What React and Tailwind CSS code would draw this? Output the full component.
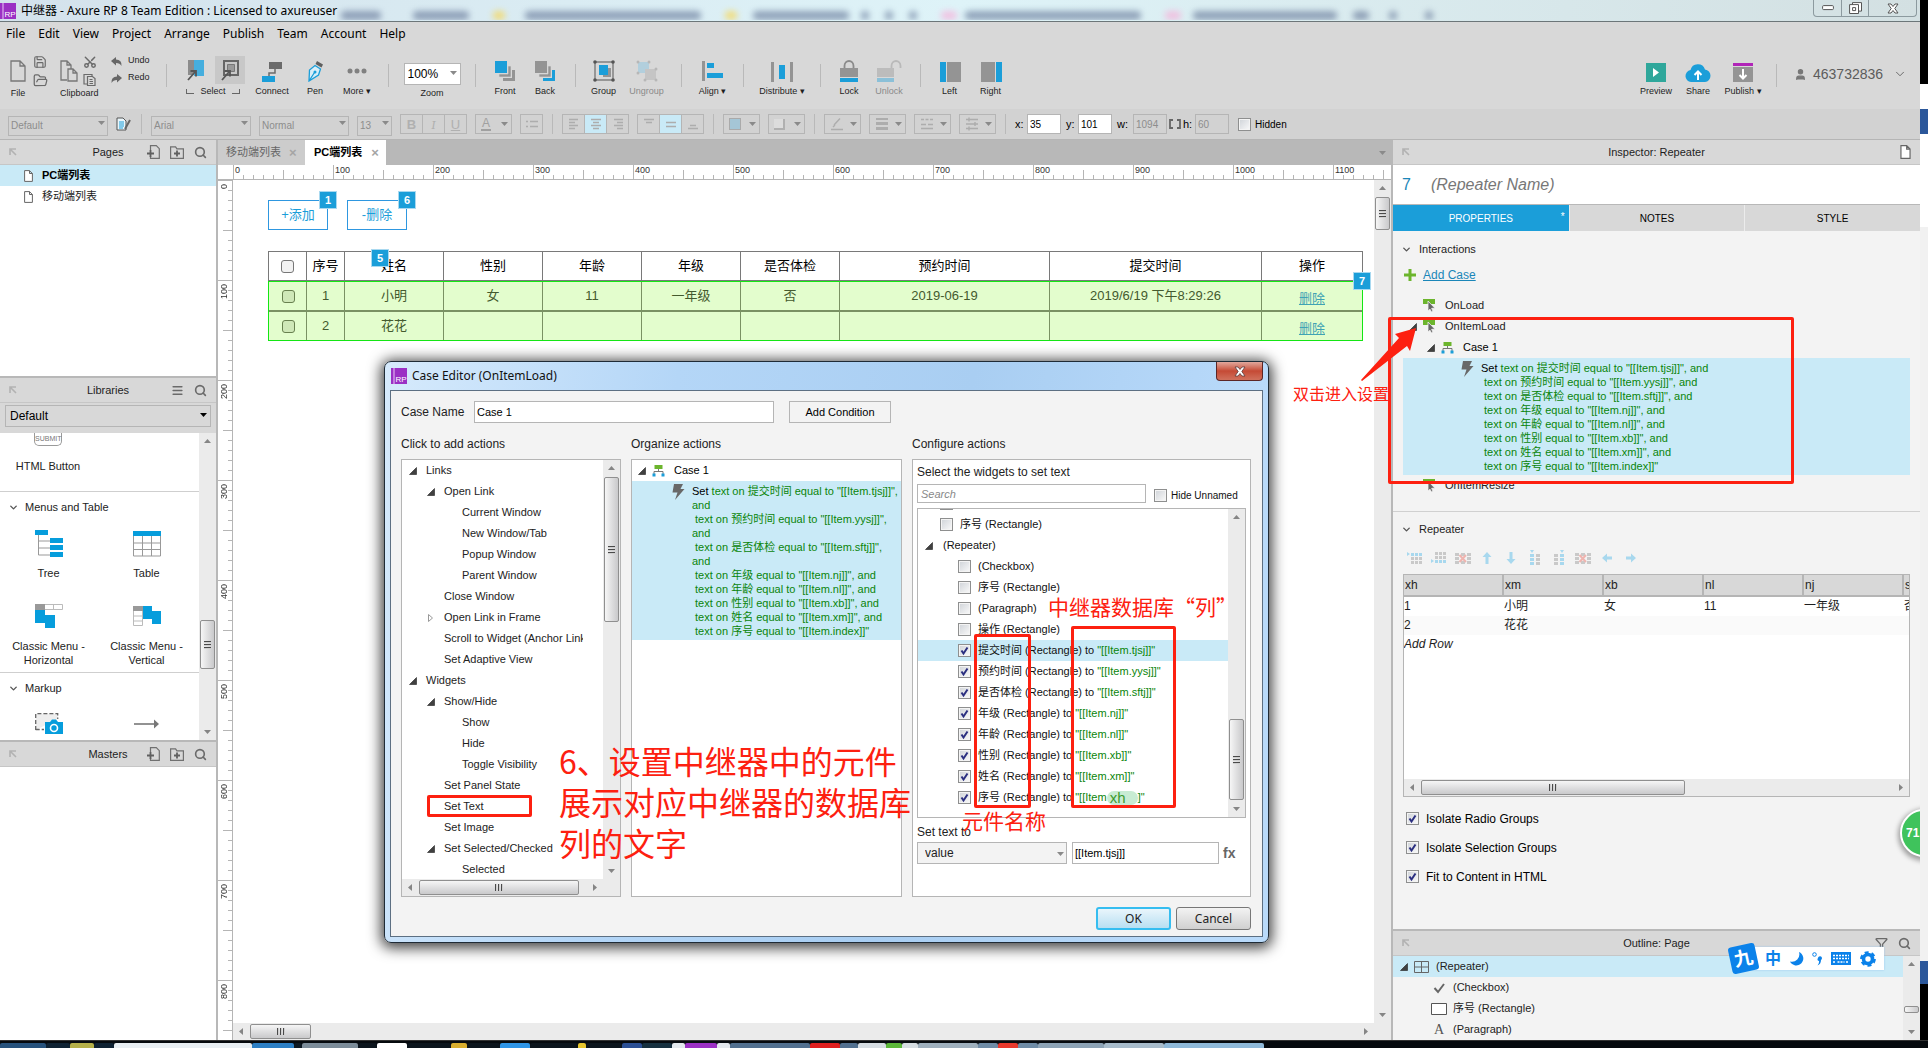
import React from "react";
import { Search, Menu, ChevronDown, Scissors, Save, FolderOpen, User, Funnel } from "lucide-react";

const BLUE = "#1b9ed9";
const GRAY = "#949494";

function Caret({ className = "", tone = "text-[#8a8a8a]" }) {
  return (
    <svg className={"pointer-events-none shrink-0 " + tone + " " + className} width="7" height="4" viewBox="0 0 7 4">
      <path d="M0 0h7L3.5 4z" fill="currentColor" />
    </svg>
  );
}

/* ---------- scroll bars ---------- */
function Tri({ dir }) {
  const d = { up: "M0 5 3.5 1 7 5z", down: "M0 2h7L3.5 6z", left: "M5 0v7L1 3.5z", right: "M2 0v7l4-3.5z" }[dir];
  return (
    <svg width="7" height="7" viewBox="0 0 7 7">
      <path d={d} fill="#858585" />
    </svg>
  );
}

function VScroll({ before = "h-0", thumb, grip = true }) {
  return (
    <div className="flex w-[17px] shrink-0 flex-col items-center bg-[#ebebeb]">
      <button aria-label="Scroll up" className="flex h-[17px] w-full shrink-0 items-center justify-center"><Tri dir="up" /></button>
      <div className={"shrink-0 " + before} />
      <div className={"flex w-[15px] shrink-0 flex-col items-center justify-center gap-px rounded-xs border border-[#8f8f8f] bg-linear-to-r from-[#f6f6f6] to-[#c9c9cb] " + thumb}>
        {grip && [0, 1, 2].map((i) => <div key={i} className="h-[2px] w-[7px] border-t border-[#4a4a4a] bg-[#cfcfcf]" />)}
      </div>
      <div className="flex-1" />
      <button aria-label="Scroll down" className="flex h-[17px] w-full shrink-0 items-center justify-center"><Tri dir="down" /></button>
    </div>
  );
}

function HScroll({ thumb }) {
  return (
    <div className="flex h-[17px] min-w-0 flex-1 items-center bg-[#ebebeb]">
      <button aria-label="Scroll left" className="flex h-full w-[17px] shrink-0 items-center justify-center"><Tri dir="left" /></button>
      <div className={"flex h-[15px] shrink-0 items-center justify-center gap-px rounded-xs border border-[#8f8f8f] bg-linear-to-b from-[#f6f6f6] to-[#c9c9cb] " + thumb}>
        {[0, 1, 2].map((i) => <div key={i} className="h-[7px] w-[2px] border-l border-[#4a4a4a] bg-[#cfcfcf]" />)}
      </div>
      <div className="flex-1" />
      <button aria-label="Scroll right" className="flex h-full w-[17px] shrink-0 items-center justify-center"><Tri dir="right" /></button>
    </div>
  );
}

/* ---------- small shared pieces ---------- */
function Check({ label, checked, gap = "gap-[7px]", children, className = "" }) {
  return (
    <label className={"flex items-center " + gap + " " + className}>
      <span className="relative flex h-[13px] w-[13px] shrink-0">
        <input type="checkbox" defaultChecked={checked} aria-label={label}
          className="peer h-[13px] w-[13px] appearance-none border border-[#8e8f8f] bg-linear-to-br from-[#cfd3d8] to-[#fafafa] shadow-[inset_0_0_0_1px_#f4f4f4]" />
        <svg className="pointer-events-none absolute inset-0 hidden peer-checked:block" width="13" height="13" viewBox="0 0 13 13">
          <path d="M3.500 6.500 5.500 9.500 9.500 3.500" fill="none" stroke="#2b2f80" strokeWidth="2" />
        </svg>
      </span>
      {children}
    </label>
  );
}

function Expander({ open = true }) {
  return (
    <svg width="8" height="8" viewBox="0 0 8 8" className="shrink-0">
      {open ? <path d="M7.500 0.500v7h-7z" fill="#404040" stroke="#222" strokeWidth=".6" /> : <path d="M1.500 0.500v7l4-3.500z" fill="#fff" stroke="#999" />}
    </svg>
  );
}

function CaseIcon() {
  return (
    <svg width="13" height="12" viewBox="0 0 13 12" className="shrink-0">
      <rect x="2.500" y="0" width="8" height="4" fill="#6cb52d" />
      <path d="M6.500 4v2M2 9V6.500h9V9" fill="none" stroke="#777" />
      <rect x="0.500" y="8.500" width="3" height="3" fill={BLUE} />
      <rect x="9.500" y="8.500" width="3" height="3" fill={BLUE} />
    </svg>
  );
}

function Bolt() {
  return (
    <svg width="13" height="16" viewBox="0 0 13 16" className="shrink-0">
      <path d="M2 0h9L8.500 5h4L3 16 5.500 8.500H.500z" fill="#686868" />
    </svg>
  );
}

function EventIcon() {
  return (
    <svg width="13" height="13" viewBox="0 0 13 13" className="shrink-0">
      <path d="M0 0h12v5H0z" fill="#6cb52d" />
      <path d="M5 2v10l2-1.800 1.500 2.800 1.500-.7L8.600 9.300H12z" fill="#666" stroke="#f3f3f3" strokeWidth=".8" />
    </svg>
  );
}

function DockArrow() {
  return (
    <svg width="8" height="8" viewBox="0 0 8 8" className="shrink-0">
      <path d="M1 7V1h6M1 1l6 6" fill="none" stroke="#b2b2b2" strokeWidth="1.600" />
    </svg>
  );
}

function AddPageIcon() {
  return (
    <svg width="13" height="14" viewBox="0 0 13 14">
      <path d="M3.500 5V.7h5.800l3 3v9.600H3.500V11" fill="none" stroke="#707070" strokeWidth="1.200" />
      <path d="M0 8.500h7M3.500 5v7" stroke="#606060" strokeWidth="1.800" />
    </svg>
  );
}

function AddFolderIcon() {
  return (
    <svg width="14" height="13" viewBox="0 0 14 13">
      <path d="M.6 12.300V.8h5l1.300 2h6.500v9.500z" fill="none" stroke="#707070" strokeWidth="1.200" />
      <path d="M4 7.500h6M7 4.500v6" stroke="#606060" strokeWidth="1.800" />
    </svg>
  );
}

function PageIcon({ w = 9, h = 12 }) {
  return (
    <svg width={w} height={h} viewBox="0 0 9 12" className="shrink-0">
      <path d="M.6.6H5.500L8.400 3.500V11.400H.6zM5.500.6V3.500H8.400" fill="#fff" stroke="#666" />
    </svg>
  );
}

function RPLogo() {
  return (
    <svg width="16" height="16" viewBox="0 0 16 16" className="shrink-0">
      <rect width="16" height="16" fill="#9b30c4" />
      <rect x="2.500" width="1" height="16" fill="#e9c8f5" />
      <text x="4.500" y="14" fontSize="8" fill="#fff" fontFamily="Liberation Sans">RP</text>
    </svg>
  );
}

/* ---------- window frame ---------- */
const blurTabs = ["ml-1 w-10", "ml-8 w-14", "ml-6 w-3 bg-amber-300", "ml-5 w-44", "ml-6 w-3 bg-amber-300", "ml-4 w-24", "ml-3 w-2", "ml-4 w-2", "ml-4 w-2", "ml-6 w-4 bg-pink-300", "ml-2 w-44", "ml-6 w-4 bg-pink-300", "ml-3 w-36", "ml-4 w-4", "ml-5 w-2", "ml-7 w-2"];

function TitleBar() {
  return (
    <header className="flex h-[22px] shrink-0 items-center overflow-hidden border-b border-[#6c7679] bg-linear-to-r from-[#d4e2ec] via-[#def3f8] to-[#d3e0e2]">
      <RPLogo />
      <h1 className="ml-[5px] shrink-0 whitespace-nowrap font-['Noto_Sans','Noto_Sans_CJK_SC',sans-serif] text-[12px] leading-5 text-black">
        中继器 - Axure RP 8 Team Edition : Licensed to axureuser
      </h1>
      <div className="flex min-w-0 flex-1 items-center overflow-hidden pt-[9px] opacity-60">
        {blurTabs.map((c, i) => (
          <div key={i} className={"h-[9px] shrink-0 rounded-sm blur-[3px] " + (c.includes("bg-") ? "" : "bg-[#5d6f92] ") + c} />
        ))}
      </div>
      <div className="mr-[3px] flex h-[17px] shrink-0 self-start rounded-b border border-t-0 border-[#8c9a9f] text-[#555]">
        <button aria-label="Minimize" className="flex w-7 items-center justify-center border-r border-[#8c9a9f]">
          <svg width="12" height="6" viewBox="0 0 12 6"><rect x=".6" y=".6" width="10.800" height="4" rx="1" fill="#fff" stroke="#555" /></svg>
        </button>
        <button aria-label="Restore" className="flex w-[27px] items-center justify-center border-r border-[#8c9a9f]">
          <svg width="13" height="12" viewBox="0 0 13 12" fill="#fff" stroke="#555"><path d="M3.500.6h9v8.500h-9z" /><path d="M.6 2.600h8.900v8.900H.6z" /><path d="M3.600 5.600h3v3h-3z" /></svg>
        </button>
        <button aria-label="Close" className="flex w-[47px] items-center justify-center">
          <svg width="12" height="11" viewBox="0 0 12 11"><path d="M1 1h3l2 2.500L8 1h3L7.800 5.500 11 10H8L6 7.500 4 10H1l3.200-4.500z" fill="#fff" stroke="#555" /></svg>
        </button>
      </div>
    </header>
  );
}

function MenuBar() {
  return (
    <nav className="flex h-6 shrink-0 items-center gap-[13px] bg-[#d8d8d8] pl-[6px] font-['Noto_Sans',sans-serif] text-[12px] text-black">
      {["File", "Edit", "View", "Project", "Arrange", "Publish", "Team", "Account", "Help"].map((m) => <button key={m}>{m}</button>)}
    </nav>
  );
}

/* ---------- main tool bar ---------- */
function Sep({ className = "" }) {
  return <div className={"mt-[18px] h-[23px] w-px shrink-0 bg-[#b9b9b9] " + className} />;
}

function Tool({ label, w, dim, children }) {
  return (
    <button className={"flex shrink-0 flex-col items-center pt-[14px] " + w + (dim ? " text-[#8a8a8a]" : " text-[#1e1e1e]")}>
      <span className={"flex h-[22px] items-center " + (dim ? "opacity-40" : "")}>{children}</span>
      <span className="mt-[3px] whitespace-nowrap text-[9px] leading-3">{label}</span>
    </button>
  );
}

function Svg({ w = 22, h = 22, children }) {
  return <svg width={w} height={h} viewBox={`0 0 ${w} ${h}`}>{children}</svg>;
}

function CursorMark() {
  return <path d="M1 21 8 13M3.500 12H9V17.500" fill="none" stroke="#555" strokeWidth="1.800" />;
}

function Toolbar() {
  return (
    <div className="flex h-[63px] shrink-0 overflow-hidden bg-[#d8d8d8]">
      <div className="flex w-[56px] shrink-0 pl-[10px] pt-[9px]">
        <button aria-label="New file" className="flex flex-col items-center text-[9px] leading-3 text-[#1e1e1e]">
          <span className="mt-[5px] flex h-[22px]"><Svg w={16}><path d="M1 1h9l5 5v15H1zM10 1v5h5" fill="none" stroke="#777" strokeWidth="1.300" /></Svg></span>
          <span className="mt-[5px]">File</span>
        </button>
        <div className="ml-[7px] flex flex-col gap-[4px] text-[#6a6a6a]">
          <button aria-label="Save"><Save size={14} strokeWidth={2} /></button>
          <button aria-label="Open"><FolderOpen size={15} strokeWidth={2} /></button>
        </div>
      </div>
      <div className="flex w-[48px] shrink-0 flex-col pl-[4px] pt-[9px]">
        <div className="flex h-[32px] gap-[5px]">
          <button aria-label="Copy" className="mt-[5px] h-[22px]"><Svg w={18}><path d="M7 20H1V1h6l4 4v4M7 1v4h4M8 9h5l4 4v8H8zM13 9v4h4" fill="none" stroke="#777" strokeWidth="1.300" /></Svg></button>
          <div className="flex flex-col gap-[4px] text-[#6a6a6a]">
            <button aria-label="Cut"><Scissors size={14} strokeWidth={2.500} className="-rotate-90" /></button>
            <button aria-label="Paste"><Svg w={13} h={13}><path d="M4.500 11H1V1.500h8V3M4.500 3.500h5l2.500 2v7H4.500zM6.500 6.500h3M6.500 8.500h3.500M6.500 10.500h3.500" fill="none" stroke="#6a6a6a" strokeWidth="1.200" /></Svg></button>
          </div>
        </div>
        <span className="text-[9px] leading-3 text-[#1e1e1e]">Clipboard</span>
      </div>
      <div className="flex w-[62px] shrink-0 flex-col gap-[3px] pl-[7px] pt-[8px] text-[9px] text-[#1e1e1e]">
        <button className="flex h-[14px] items-center gap-[6px]"><Svg w={11} h={9}><path d="M0 4 5 0v2.500q6 0 5.500 6.500Q9 6 5 6v2.500z" fill="#666" /></Svg>Undo</button>
        <button className="flex h-[14px] items-center gap-[6px]"><Svg w={11} h={9}><path d="M11 4 6 0v2.500Q0 2.500.5 9 2 6 6 6v2.500z" fill="#666" /></Svg>Redo</button>
      </div>
      <Sep />
      <div className="flex w-[78px] shrink-0 flex-col pt-[10px]">
        <div className="flex h-[28px] items-center pl-[18px]">
          <button aria-label="Select intersected" className="flex w-[22px] justify-center"><Svg w={18}><path d="M1 1h7v15H1z" fill="#8b8b8b" /><path d="M7 1h10v16H7z" fill="#45aede" /><CursorMark /></Svg></button>
          <button aria-label="Select contained" className="ml-[8px] flex h-[28px] w-[30px] items-center justify-center bg-[#c8c8c8]"><Svg w={18}><path d="M3 2h14v14H3z" fill="none" stroke="#666" strokeWidth="2" /><path d="M6.500 5.500h7v7h-7z" fill="#999" stroke="#777" /><CursorMark /></Svg></button>
        </div>
        <div className="mt-px flex items-end justify-center gap-[6px] pl-[14px] text-[9px] leading-3 text-[#1e1e1e]">
          <span className="mb-[3px] h-[5px] w-[8px] border-b border-l border-[#666]" />Select<span className="mb-[3px] h-[5px] w-[8px] border-b border-r border-[#666]" />
        </div>
      </div>
      <Tool label="Connect" w="w-[54px]"><Svg><path d="M8 2h13v7H8z" fill="#6b6b6b" /><path d="M14 9v4H8v3" fill="none" stroke="#6b6b6b" strokeWidth="1.500" /><path d="M1 16h13v6H1z" fill={BLUE} /></Svg></Tool>
      <Tool label="Pen" w="w-[32px]"><Svg w={18}><path d="M11 1 17 4.500 15.500 7.500 9.500 4z" fill="#5f5f5f" /><path d="M9 5.500 14.500 9 12.500 15 3 21 3.500 10zM3 21 8.500 12.500" fill="#d9eef8" stroke={BLUE} strokeWidth="1.300" /><circle cx="9" cy="12" r="1.500" fill={BLUE} /></Svg></Tool>
      <Tool label="More ▾" w="w-[52px]"><Svg><g fill="#808080"><circle cx="4" cy="11" r="2.500" /><circle cx="11" cy="11" r="2.500" /><circle cx="18" cy="11" r="2.500" /></g></Svg></Tool>
      <Sep className="ml-[5px]" />
      <div className="flex w-[86px] shrink-0 flex-col items-center pt-[15px]">
        <div className="relative">
          <select id="zoom" className="h-[22px] w-[57px] appearance-none border border-[#b5b5b5] bg-white pl-[3px] text-[12px] text-black"><option>100%</option></select>
          <Caret className="absolute right-[4px] top-[10px]" />
        </div>
        <label htmlFor="zoom" className="mt-[2px] text-[9px] leading-3 text-[#1e1e1e]">Zoom</label>
      </div>
      <Sep />
      <div className="w-[9px] shrink-0" />
      <Tool label="Front" w="w-[40px]"><Svg><path d="M21 10v11H9v-3h9v-8z" fill={GRAY} /><path d="M17 6v11H5v-3h9V6z" fill={GRAY} stroke="#d8d8d8" strokeWidth=".6" /><path d="M1 1h12v12H1z" fill={BLUE} /></Svg></Tool>
      <Tool label="Back" w="w-[40px]"><Svg><path d="M21 10v11H9v-3h9v-8z" fill={BLUE} /><path d="M17 6v11H5v-3h9V6z" fill={GRAY} stroke="#d8d8d8" strokeWidth=".6" /><path d="M1 1h12v12H1z" fill={GRAY} /></Svg></Tool>
      <Sep className="ml-[10px]" />
      <div className="w-[6px] shrink-0" />
      <Tool label="Group" w="w-[43px]"><Svg><path d="M10 8h8v9h-8z" fill={GRAY} /><path d="M6 5h9v10H6z" fill={BLUE} /><path d="M2 2h18v18H2z" fill="none" stroke="#555" /><g fill="#555"><circle cx="2" cy="2" r="1.800" /><circle cx="20" cy="2" r="1.800" /><circle cx="2" cy="20" r="1.800" /><circle cx="20" cy="20" r="1.800" /></g></Svg></Tool>
      <Tool label="Ungroup" w="w-[43px]" dim><Svg><path d="M2 2h11v11H2z" fill="#7cc4e6" /><path d="M9 9h11v11H9z" fill="#aaa" /><g fill="#888"><circle cx="2" cy="2" r="1.500" /><circle cx="13" cy="2" r="1.500" /><circle cx="2" cy="13" r="1.500" /><circle cx="20" cy="9" r="1.500" /><circle cx="9" cy="20" r="1.500" /><circle cx="20" cy="20" r="1.500" /></g></Svg></Tool>
      <Sep className="ml-[13px]" />
      <Tool label="Align ▾" w="w-[61px]"><Svg><path d="M0 1h3v20H0z" fill={GRAY} /><path d="M5 3h7v5H5zM5 13h16v5H5z" fill={BLUE} /></Svg></Tool>
      <Sep />
      <Tool label="Distribute ▾" w="w-[76px]"><Svg><path d="M0 2h3v20H0zM19 2h3v20h-3z" fill={GRAY} /><path d="M8 5h6v14H8z" fill={BLUE} /></Svg></Tool>
      <Sep />
      <div className="w-[8px] shrink-0" />
      <Tool label="Lock" w="w-[40px]"><Svg><path d="M6.500 8V6a4.500 5 0 0 1 9 0v2" fill="none" stroke="#8b8b8b" strokeWidth="1.800" /><path d="M2 8h18v9H2z" fill={GRAY} /><path d="M2 18h18v4H2z" fill={BLUE} /></Svg></Tool>
      <Tool label="Unlock" w="w-[40px]" dim><Svg w={26}><path d="M15.500 8V6a4.500 5 0 0 1 9 0v2" fill="none" stroke="#8b8b8b" strokeWidth="1.800" /><path d="M1 8h17v9H1z" fill={GRAY} /><path d="M1 18h17v4H1z" fill={BLUE} /></Svg></Tool>
      <Sep className="ml-[11px]" />
      <div className="w-[8px] shrink-0" />
      <Tool label="Left" w="w-[41px]"><Svg><path d="M1 2h6v20H1z" fill={BLUE} /><path d="M8 2h14v20H8z" fill={GRAY} /></Svg></Tool>
      <Tool label="Right" w="w-[41px]"><Svg><path d="M1 2h14v20H1z" fill={GRAY} /><path d="M16 2h6v20h-6z" fill={BLUE} /></Svg></Tool>
      <div className="flex-1" />
      <Tool label="Preview" w="w-[44px]"><Svg w={20}><path d="M0 3h20v19H0z" fill="#2fa79b" /><path d="M7 8v9l6-4.500z" fill="#fff" /></Svg></Tool>
      <Tool label="Share" w="w-[40px]"><Svg w={26}><path d="M6 22a6 6 0 0 1-.5-11.900A7.500 7.500 0 0 1 20 9.500 6.300 6.300 0 0 1 20 22z" fill={BLUE} /><path d="M13 20v-8M9.500 15 13 11.500 16.500 15" fill="none" stroke="#fff" strokeWidth="2" /></Svg></Tool>
      <Tool label="Publish ▾" w="w-[50px]"><Svg w={20}><path d="M0 3h20v3H0z" fill="#b125b8" /><path d="M0 7h20v15H0z" fill={GRAY} /><path d="M10 9v9M6.500 15 10 18.500 13.500 15" fill="none" stroke="#fff" strokeWidth="2" /></Svg></Tool>
      <Sep className="ml-[8px]" />
      <button className="mt-[14px] flex h-[28px] w-[143px] shrink-0 items-center self-start pl-[17px] text-[14px] text-[#5c5c5c]">
        <User size={13} fill="#777" stroke="#777" />
        <span className="ml-[6px]">463732836</span>
        <ChevronDown size={14} strokeWidth={1.500} className="ml-[10px]" />
      </button>
    </div>
  );
}

/* ---------- format bar ---------- */
function FSep() {
  return <div className="mx-px h-[20px] w-px shrink-0 bg-[#b9b9b9]" />;
}

function FSelect({ label, value, w }) {
  return (
    <div className={"relative shrink-0 " + w}>
      <select aria-label={label} className="h-[20px] w-full appearance-none border border-[#b5b5b5] pl-[2px] text-[10px] text-[#8d8d8d]"><option>{value}</option></select>
      <Caret className="absolute right-[3px] top-[9px]" />
    </div>
  );
}

function Segs({ items }) {
  return (
    <div className="flex shrink-0 border border-[#b5b5b5]">
      {items.map(([name, node, on], i) => (
        <button key={name} aria-label={name} className={"flex h-[18px] items-center justify-center text-[13px] leading-none text-[#b0b0b0] " + (i ? "w-[22px] border-l border-[#b5b5b5] " : "w-[21px] ") + (on ? "bg-[#c9eaf7]" : "")}>{node}</button>
      ))}
    </div>
  );
}

function Lines({ d }) {
  return <Svg w={14} h={14}><path d={d} stroke="#adadad" strokeWidth="1.400" fill="none" /></Svg>;
}

function DropBtn({ name, children }) {
  return (
    <button aria-label={name} className="flex h-[20px] w-[37px] shrink-0 items-center justify-between border border-[#b5b5b5] pl-[5px] pr-[3px]">
      {children}<Caret />
    </button>
  );
}

function NumField({ id, label, lw, value, off, className = "" }) {
  return (
    <div className={"flex items-center text-[11px] " + className}>
      <label htmlFor={id} className={"text-black " + lw}>{label}</label>
      <input id={id} defaultValue={value} className={"h-[20px] w-[34px] border border-[#b5b5b5] pl-[2px] text-[10px] " + (off ? "text-[#8d8d8d]" : "bg-white text-black")} />
    </div>
  );
}

function FormatBar() {
  return (
    <div className="flex h-[31px] shrink-0 items-center gap-2 overflow-hidden border-b border-[#b5b5b5] bg-[#d2d2d2] pl-2">
      <FSelect label="Widget style" value="Default" w="w-[100px]" />
      <button aria-label="Manage styles" className="w-4 shrink-0"><Svg w={16} h={14}><path d="M1 1h6l3 3v9H1z" fill="#eaf6fb" stroke="#555" /><path d="M3 5h5M3 7h5M3 9h5M3 11h4" stroke={BLUE} /><path d="M9 12 14 3" stroke="#666" strokeWidth="2" /></Svg></button>
      <FSep />
      <FSelect label="Font" value="Arial" w="w-[100px]" />
      <FSelect label="Typeface" value="Normal" w="w-[90px]" />
      <FSelect label="Font size" value="13" w="w-[35px]" />
      <Segs items={[["Bold", <b>B</b>], ["Italic", <i className="font-serif">I</i>], ["Underline", <u>U</u>]]} />
      <DropBtn name="Font color"><span className="border-b-2 border-[#a0a0a0] px-px text-[12px] leading-[11px] text-[#a0a0a0]">A</span></DropBtn>
      <Segs items={[["Bullets", <Lines d="M1 4.500h2M5 4.500h8M1 9.500h2M5 9.500h8" />]]} />
      <FSep />
      <Segs items={[["Align left", <Lines d="M2 2.500h9M2 5.500h6M2 8.500h9M2 11.500h6" />], ["Align center", <Lines d="M2 2.500h10M4 5.500h6M2 8.500h10M4 11.500h6" />, true], ["Align right", <Lines d="M3 2.500h9M6 5.500h6M3 8.500h9M6 11.500h6" />]]} />
      <Segs items={[["Align top", <Lines d="M2 2.500h10M4 5.500h6" />], ["Align middle", <Lines d="M2 5.500h10M2 9.500h10" />, true], ["Align bottom", <Lines d="M4 8.500h6M2 11.500h10" />]]} />
      <FSep />
      <DropBtn name="Fill color"><span className="h-[12px] w-[12px] border border-[#aaa] bg-[#a5c6d6]" /></DropBtn>
      <DropBtn name="Outer shadow"><span className="h-[11px] w-[11px] border-b-2 border-r-2 border-[#b0b0b0] bg-[#dcdcdc]" /></DropBtn>
      <FSep />
      <DropBtn name="Line color"><Lines d="M4 8 10 1.500M1 12.500h12M3 10 5 8" /></DropBtn>
      <DropBtn name="Line width"><Svg w={14} h={14}><path d="M1 1h12v2H1zM1 5h12v3H1zM1 10h12v3H1z" fill="#adadad" /></Svg></DropBtn>
      <DropBtn name="Line style"><Lines d="M1 2.500h3M5.500 2.500h3M10 2.500h3M1 7.500h5M8 7.500h5M1 11.500h12" /></DropBtn>
      <DropBtn name="Arrow style"><Lines d="M1 2.500h12M1 7h12M1 11.500h12M4 .5v4M10 5v4M4 9.500v4" /></DropBtn>
      <FSep />
      <div className="flex shrink-0 items-center">
        <NumField id="fx" label="x:" lw="w-3" value="35" />
        <NumField id="fy" label="y:" lw="w-3" value="101" className="ml-[5px]" />
        <NumField id="fw" label="w:" lw="w-4" value="1094" off className="ml-[5px]" />
        <button aria-label="Keep proportions" className="mx-[2px]"><Svg w={12} h={10}><path d="M4 1H1v8h3M8 1h3v8H8" fill="none" stroke="#666" strokeWidth="1.800" /></Svg></button>
        <NumField id="fh" label="h:" lw="w-3" value="60" off />
        <Check gap="gap-[4px]" className="ml-[9px] text-[10px] text-black">Hidden</Check>
      </div>
    </div>
  );
}

/* ---------- left column ---------- */
function PanelHead({ title, children }) {
  return (
    <div className="grid h-[25px] shrink-0 grid-cols-[1fr_auto_1fr] items-center border-b border-[#c6c6c6] bg-[#d8d8d8] px-[9px] text-[11px] text-[#1e1e1e]">
      <button aria-label={"Dock " + title} className="justify-self-start"><DockArrow /></button>
      <h2>{title}</h2>
      <div className="flex items-center gap-[10px] justify-self-end text-[#6a6a6a]">{children}</div>
    </div>
  );
}

function AddSearch() {
  return (
    <>
      <button aria-label="Add"><AddPageIcon /></button>
      <button aria-label="Add folder"><AddFolderIcon /></button>
      <button aria-label="Search"><Search size={13} strokeWidth={3} /></button>
    </>
  );
}

function LibItem({ label, children }) {
  return (
    <button className="flex flex-col items-center px-1 text-[11px] leading-[14px] text-[#222]">
      <span className="flex h-[30px] items-center">{children}</span>
      <span className="mt-[7px]">{label}</span>
    </button>
  );
}

function LibHead({ children }) {
  return (
    <h3 className="flex items-center gap-[6px] border-t border-[#cfcfcf] pl-[8px] pt-[8px] text-[11px] leading-[14px] text-[#222]">
      <ChevronDown size={11} strokeWidth={3} className="text-[#555]" />{children}
    </h3>
  );
}

function LeftColumn() {
  return (
    <aside className="flex w-[218px] shrink-0 flex-col border-r-2 border-[#b8b8b8] bg-white">
      <section className="flex h-[236px] shrink-0 flex-col">
        <PanelHead title="Pages"><AddSearch /></PanelHead>
        <button className="flex h-[21px] items-center gap-[9px] bg-[#c9eaf7] pl-[24px] text-[11px] font-bold text-black"><PageIcon />PC端列表</button>
        <button className="flex h-[21px] items-center gap-[9px] pl-[24px] text-[11px] text-[#222]"><PageIcon />移动端列表</button>
      </section>
      <section className="flex h-[364px] shrink-0 flex-col border-t-2 border-[#b8b8b8]">
        <div className="bg-[#d8d8d8]">
          <PanelHead title="Libraries">
            <button aria-label="Library menu"><Menu size={13} strokeWidth={3} /></button>
            <button aria-label="Search libraries"><Search size={13} strokeWidth={3} /></button>
          </PanelHead>
          <div className="relative px-[5px] pb-[6px]">
            <select aria-label="Library" className="h-[22px] w-full appearance-none border border-[#b5b5b5] pl-1 text-[12px] text-black"><option>Default</option></select>
            <Caret className="absolute right-[9px] top-[10px]" tone="text-black" />
          </div>
        </div>
        <div className="flex min-h-0 flex-1">
          <div className="flex-1 overflow-hidden">
            <button className="flex w-[96px] flex-col items-center text-[11px] leading-[14px] text-[#222]">
              <span className="h-[13px] w-[28px] rounded-b-[5px] border border-t-0 border-[#9a9a9a] text-center text-[7px] leading-[11px] text-[#777]">SUBMIT</span>
              <span className="mt-[13px]">HTML Button</span>
            </button>
            <div className="h-[18px]" />
            <LibHead>Menus and Table</LibHead>
            <div className="grid grid-cols-[97px_99px] gap-y-[22px] pb-[5px] pt-[15px]">
              <LibItem label="Tree"><Svg w={28} h={28}><path d="M3.500 4v21H16M3.500 11H16M3.500 18H16" fill="none" stroke="#999" /><path d="M0 0h13v5H0zM15 8h13v5H15zM15 15h13v5H15zM15 22h13v5H15z" fill="#069ddc" /></Svg></LibItem>
              <LibItem label="Table"><Svg w={28} h={26}><path d="M.5 5v20h27V5M.5 12h27M.5 18.500h27M9.500 5v20M18.500 5v20" fill="none" stroke="#999" /><path d="M0 0h28v5H0z" fill="#069ddc" /></Svg></LibItem>
              <LibItem label="Classic Menu - Horizontal"><Svg w={28} h={26}><path d="M10 .5h17.500v5H10M18.500 0v6" fill="none" stroke="#bbb" /><path d="M0 0h10v6H0z" fill="#999" /><path d="M0 6h10v5h10v13H10v-5H0z" fill="#069ddc" /></Svg></LibItem>
              <LibItem label="Classic Menu - Vertical"><Svg w={28} h={22}><path d="M.5 5v14.500h9V5M.5 10h9M.5 15h9" fill="none" stroke="#bbb" /><path d="M0 0h10v5H0z" fill="#999" /><path d="M10 0h9v5h9v13h-9v-5h-9z" fill="#069ddc" /></Svg></LibItem>
            </div>
            <LibHead>Markup</LibHead>
            <div className="grid grid-cols-[97px_99px] justify-items-center pt-[18px]">
              <button aria-label="Snapshot"><Svg w={28} h={22}><path d="M.7 17V.7h22V6M.7 16.500H9" fill="#eee" stroke="#666" strokeWidth="1.300" strokeDasharray="4 2" /><path d="M10 9h5l2-2.500h4L23 9h5v12H10z" fill="#069ddc" /><circle cx="19" cy="15" r="3.500" fill="none" stroke="#fff" strokeWidth="1.600" /></Svg></button>
              <button aria-label="Arrow"><Svg w={26} h={12}><path d="M0 6h22" stroke="#777" strokeWidth="1.600" /><path d="M20 1.500 25 6l-5 4.500z" fill="#777" /></Svg></button>
            </div>
          </div>
          <VScroll before="h-[170px]" thumb="h-[49px]" />
        </div>
      </section>
      <section className="flex-1 border-t-2 border-[#b8b8b8]">
        <PanelHead title="Masters"><AddSearch /></PanelHead>
      </section>
    </aside>
  );
}

/* ---------- canvas ---------- */
const steps = [10, 20, 30, 40, 50, 60, 70, 80, 90];

function HRuler() {
  return (
    <div className="flex h-[15px] shrink-0 overflow-hidden border-b border-[#b5b5b5] bg-white pl-[15px]">
      {Array.from({ length: 12 }, (_, i) => (
        <div key={i} className="relative w-[100px] shrink-0 border-l border-[#b5b5b5] pl-px text-[9px] leading-[11px] text-[#333]">
          {i * 100}
          <svg className="absolute -left-px bottom-0" width="100" height="14" viewBox="0 0 100 14">
            {steps.map((s) => <path key={s} d={`M${s + 0.5} 14V${s === 50 ? 5 : 10}`} stroke="#b5b5b5" />)}
          </svg>
        </div>
      ))}
    </div>
  );
}

function VRuler() {
  return (
    <div className="w-[15px] shrink-0 overflow-hidden border-r border-[#b5b5b5] bg-white">
      {Array.from({ length: 9 }, (_, i) => (
        <div key={i} className="relative h-[100px] border-t border-[#b5b5b5] pt-[3px] text-[9px] text-[#333]">
          <span className="block rotate-180 leading-[12px] [writing-mode:vertical-rl]">{i * 100}</span>
          <svg className="absolute -top-px right-0" width="15" height="100" viewBox="0 0 15 100">
            {steps.map((s) => <path key={s} d={`M15 ${s + 0.5}H${s === 50 ? 6 : 11}`} stroke="#b5b5b5" />)}
          </svg>
        </div>
      ))}
    </div>
  );
}

function Badge({ n, className }) {
  return <span className={"absolute flex h-[18px] w-[18px] items-center justify-center border border-[#a9d9f0] bg-[#1b9ed9] text-[11px] font-bold text-white " + className}>{n}</span>;
}

function Cols() {
  return (
    <colgroup>
      <col className="w-[38px]" /><col className="w-[38px]" /><col className="w-[99px]" /><col className="w-[99px]" /><col className="w-[99px]" /><col className="w-[99px]" /><col className="w-[99px]" /><col className="w-[210px]" /><col className="w-[212px]" /><col className="w-[100px]" />
    </colgroup>
  );
}

function RowBox({ label, green }) {
  return <input type="checkbox" aria-label={label} className={"block h-[13px] w-[13px] appearance-none rounded-[3px] border " + (green ? "ml-[13px] border-[#68804f] bg-[#cfe8b8]" : "ml-[12px] border-[#777] bg-[#f2f2f2]")} />;
}

const records = [
  ["1", "小明", "女", "11", "一年级", "否", "2019-06-19", "2019/6/19 下午8:29:26"],
  ["2", "花花", "", "", "", "", "", ""],
];

function Page() {
  return (
    <div className="min-w-0 flex-1 overflow-hidden bg-white pl-[35px] pt-[20px] text-[13px]">
      <div className="flex gap-[19px]">
        {[["+添加", "1"], ["-删除", "6"]].map(([t, n]) => (
          <div key={n} className="relative">
            <button className="h-[30px] w-[60px] border border-[#2e97e0] text-[#1b9ed9]">{t}</button>
            <Badge n={n} className="left-[51px] top-[-9px]" />
          </div>
        ))}
      </div>
      <div className="relative mt-[21px] w-[1093px]">
        <table className="w-full table-fixed border-separate border-spacing-0 border border-[#797979] text-black">
          <Cols />
          <thead>
            <tr className="h-[28px]">
              <th className="border-r border-[#797979] p-0"><RowBox label="全选" /></th>
              {["序号", "姓名", "性别", "年龄", "年级", "是否体检", "预约时间", "提交时间", "操作"].map((h, i) => (
                <th key={h} className={"p-0 font-normal leading-[18px] " + (i < 8 ? "border-r border-[#797979]" : "")}>{h}</th>
              ))}
            </tr>
          </thead>
        </table>
        <table className="w-full table-fixed border-separate border-spacing-0 border border-[#14e614] bg-[#e3fdcd] text-[#445a2e]">
          <Cols />
          <tbody>
            {records.map((r, ri) => {
              const b = ri === 0 ? " border-b-2 border-[#7a9163]" : " border-[#7a9163]";
              return (
                <tr key={ri} className={ri === 0 ? "h-[30px]" : "h-[28px]"}>
                  <td className={"border-r p-0" + b}><RowBox label={"选择 " + r[0]} green /></td>
                  {r.map((c, i) => <td key={i} className={"border-r p-0 text-center leading-[18px]" + b}>{c}</td>)}
                  <td className={"p-0 pt-[6px] text-center leading-[18px]" + b}><a href="#delete" className="text-[#3fa3b4] underline">删除</a></td>
                </tr>
              );
            })}
          </tbody>
        </table>
        <Badge n="5" className="left-[103px] top-[-2px]" />
        <Badge n="7" className="right-[-10px] top-[21px]" />
      </div>
    </div>
  );
}

function Canvas() {
  return (
    <main className="flex min-w-0 flex-1 flex-col">
      <div className="flex h-[25px] shrink-0 items-stretch bg-[#b8b8b8] text-[11px]">
        <div className="flex w-[87px] items-center gap-[8px] bg-[#cccccc] pl-[8px] text-[#666]"><button>移动端列表</button><button aria-label="Close tab" className="text-[13px] font-bold text-[#a5a5a5]">×</button></div>
        <div className="flex w-[81px] items-center gap-[9px] bg-white pl-[9px] text-black"><button className="font-bold">PC端列表</button><button aria-label="Close tab" className="text-[13px] font-bold text-[#a5a5a5]">×</button></div>
        <button aria-label="Tab list" className="ml-auto mr-[5px]"><Caret /></button>
      </div>
      <HRuler />
      <div className="flex min-h-0 flex-1">
        <VRuler />
        <div className="flex min-w-0 flex-1 flex-col">
          <div className="flex min-h-0 flex-1"><Page /><VScroll thumb="h-[33px]" /></div>
          <div className="flex"><HScroll thumb="w-[61px]" /><div className="w-[17px] bg-[#ebebeb]" /></div>
        </div>
      </div>
    </main>
  );
}

/* ---------- inspector ---------- */
const actions = [
  ["提交时间", "tjsj"], ["预约时间", "yysj"], ["是否体检", "sftj"], ["年级", "nj"],
  ["年龄", "nl"], ["性别", "xb"], ["姓名", "xm"], ["序号", "index"],
];

function ActionLines({ wrapLong }) {
  return (
    <div className="text-[11px] leading-[14px] text-[#0a850a]">
      {actions.map(([n, f], i) => {
        const last = i === actions.length - 1;
        const wrap = wrapLong && i < 3;
        return (
          <div key={f} className={"whitespace-pre " + (wrap ? "h-[28px]" : "h-[14px]")}>
            {i === 0 ? <span className="text-black">Set </span> : " "}
            {`text on ${n} equal to "[[Item.${f}]]"${last ? "" : ","}`}
            {last ? "" : wrap ? "\nand" : " and"}
          </div>
        );
      })}
    </div>
  );
}

function SectionHead({ children, className }) {
  return (
    <h3 className={"flex shrink-0 items-center gap-[7px] pl-[8px] text-[11px] text-[#222] " + className}>
      <ChevronDown size={11} strokeWidth={3} className="text-[#555]" />{children}
    </h3>
  );
}

function GridOp({ name, kind }) {
  const g = "#c9c9c9", b = "#a8d8ee";
  return (
    <button aria-label={name} className="flex w-4 justify-center">
      <Svg w={16} h={16}>
        {kind === "up" && <path d="M8 2 12.500 7H9.500v7h-3V7H3.500z" fill={b} />}
        {kind === "down" && <path d="M8 14 3.500 9h3V2h3v7h3z" fill={b} />}
        {kind === "left" && <path d="M3 8l5-4.500V6.500h5v3H8v3z" fill={b} />}
        {kind === "right" && <path d="M13 8 8 3.500V6.500H3v3h5v3z" fill={b} />}
        {kind === "rowa" && <><path d="M4 3h3v3H4zM8 3h3v3H8zM12 3h3v3h-3z" fill={b} /><path d="M4 7h3v3H4zM8 7h3v3H8zM12 7h3v3h-3zM4 11h3v3H4zM8 11h3v3H8zM12 11h3v3h-3z" fill={g} /><path d="M0 2v4l3-2z" fill={b} /></>}
        {kind === "rowb" && <><path d="M4 10h3v3H4zM8 10h3v3H8zM12 10h3v3h-3z" fill={b} /><path d="M4 2h3v3H4zM8 2h3v3H8zM12 2h3v3h-3zM4 6h3v3H4zM8 6h3v3H8zM12 6h3v3h-3z" fill={g} /><path d="M0 9v4l3-2z" fill={b} /></>}
        {kind === "del" && <><path d="M0 3h4v3H0zM6 3h4v3H6zM12 3h4v3h-4zM0 7h4v3H0zM12 7h4v3h-4zM0 11h4v3H0zM6 11h4v3H6zM12 11h4v3h-4z" fill={g} /><path d="M4.500 5 11 12M11 5 4.500 12" stroke="#efb4af" strokeWidth="2" /></>}
        {kind === "cola" && <><path d="M3 4h4v3H3zM3 8h4v3H3zM3 12h4v3H3zM3 0h4L5 3z" fill={b} /><path d="M9 4h4v3H9zM9 8h4v3H9zM9 12h4v3H9z" fill={g} /></>}
        {kind === "colb" && <><path d="M9 4h4v3H9zM9 8h4v3H9zM9 12h4v3H9zM9 0h4l-2 3z" fill={b} /><path d="M3 4h4v3H3zM3 8h4v3H3zM3 12h4v3H3z" fill={g} /></>}
      </Svg>
    </button>
  );
}

function Inspector() {
  return (
    <aside className="flex w-[529px] shrink-0 flex-col border-l-2 border-[#b8b8b8] bg-[#f3f3f3]">
      <PanelHead title="Inspector: Repeater"><button aria-label="Page inspector"><PageIcon w={11} h={14} /></button></PanelHead>
      <div className="flex h-[40px] shrink-0 items-center gap-5 border-b border-[#b8b8b8] bg-white pl-[9px] text-[16px]">
        <span className="text-[#1a86b8]">7</span>
        <input aria-label="Repeater name" placeholder="(Repeater Name)" className="w-64 italic text-[#555] placeholder:text-[#777]" />
      </div>
      <div className="grid h-[26px] shrink-0 grid-cols-3 text-[10px] text-black" role="tablist">
        <button role="tab" aria-selected="true" className="relative bg-[#1b9ed9] text-white">PROPERTIES<span className="absolute right-1 top-[4px]">*</span></button>
        <button role="tab" className="border-l border-[#ececec] bg-[#d8d8d8]">NOTES</button>
        <button role="tab" className="border-l border-[#ececec] bg-[#d8d8d8]">STYLE</button>
      </div>
      <div className="flex min-h-0 flex-1 flex-col overflow-hidden">
        <SectionHead className="mt-2 h-5">Interactions</SectionHead>
        <div className="mt-[6px] flex h-5 shrink-0 items-center gap-[7px] pl-[11px]">
          <Svg w={12} h={12}><path d="M4.500 0h3v4.500H12v3H7.500V12h-3V7.500H0v-3h4.500z" fill="#6cb52d" /></Svg>
          <a href="#add-case" className="text-[12px] text-[#1a86b8] underline">Add Case</a>
        </div>
        <div className="mt-[10px] flex h-[21px] shrink-0 items-center gap-[9px] pl-[30px] text-[11px] text-[#222]"><EventIcon />OnLoad</div>
        <div className="flex h-[21px] shrink-0 items-center pl-[16px] text-[11px] text-[#222]"><Expander /><span className="ml-[6px] flex items-center gap-[9px]"><EventIcon />OnItemLoad</span></div>
        <div className="flex h-[21px] shrink-0 items-center pl-[34px] text-[11px] text-black"><Expander /><span className="ml-[6px] flex items-center gap-[9px]"><CaseIcon />Case 1</span></div>
        <div className="mx-[10px] flex shrink-0 gap-[7px] bg-[#c9eaf7] pb-[2px] pl-[58px] pt-[3px]"><Bolt /><ActionLines /></div>
        <div className="flex h-[21px] shrink-0 items-center gap-[9px] pl-[30px] text-[11px] text-[#222]"><EventIcon />OnItemResize</div>
        <SectionHead className="mt-[15px] h-[35px] border-t border-[#d0d0d0]">Repeater</SectionHead>
        <div className="mt-[2px] flex h-5 shrink-0 items-center gap-2 pl-[14px]">
          {[["Add row above", "rowa"], ["Add row below", "rowb"], ["Delete row", "del"], ["Move row up", "up"], ["Move row down", "down"], ["Add column left", "cola"], ["Add column right", "colb"], ["Delete column", "del"], ["Move column left", "left"], ["Move column right", "right"]].map(([n, k]) => <GridOp key={n} name={n} kind={k} />)}
        </div>
        <div className="mx-[10px] mt-[6px] flex h-[223px] shrink-0 flex-col overflow-hidden border border-[#b5b5b5] bg-white">
          <div className="flex-1 overflow-hidden">
            <table className="w-[600px] table-fixed border-separate border-spacing-0 text-left text-[12px] leading-[19px] text-[#1e1e1e]">
              <thead>
                <tr>{["xh", "xm", "xb", "nl", "nj", "sftj"].map((h) => <th key={h} className="h-[22px] border-b-2 border-r-2 border-[#b5b5b5] bg-[#d8d8d8] p-0 pl-px font-normal">{h}</th>)}</tr>
              </thead>
              <tbody>
                {[["1", "小明", "女", "11", "一年级", "否"], ["2", "花花", "", "", "", ""]].map((r) => (
                  <tr key={r[0]} className="even:bg-[#fafafa]">{r.map((c, i) => <td key={i} className="h-[19px] p-0">{c}</td>)}</tr>
                ))}
                <tr><td className="p-0 italic">Add Row</td></tr>
              </tbody>
            </table>
          </div>
          <div className="flex"><HScroll thumb="w-[264px]" /></div>
        </div>
        <div className="mt-[7px] flex flex-col pl-[13px] text-[12px] text-black">
          {["Isolate Radio Groups", "Isolate Selection Groups", "Fit to Content in HTML"].map((t) => <Check key={t} checked className="h-[29px]">{t}</Check>)}
        </div>
      </div>
      <section className="flex h-[111px] shrink-0 flex-col border-t-2 border-[#b8b8b8]">
        <PanelHead title="Outline: Page">
          <button aria-label="Filter"><Funnel size={13} strokeWidth={2.500} /></button>
          <button aria-label="Search outline"><Search size={13} strokeWidth={3} /></button>
        </PanelHead>
        <div className="flex min-h-0 flex-1 text-[11px] text-[#222]">
          <div className="flex-1">
            <button className="flex h-[21px] w-full items-center bg-[#c9eaf7] pl-[7px]"><Expander /><span className="ml-[6px] flex items-center gap-[7px]"><Svg w={15} h={12}><path d="M.5.5h14v11H.5zM7.500.5v11M.5 6h14" fill="none" stroke="#666" /></Svg>(Repeater)</span></button>
            <button className="flex h-[21px] w-full items-center gap-[6px] pl-[38px]"><Svg w={16} h={12}><path d="M3.500 6 7 10 13 2" fill="none" stroke="#666" strokeWidth="2" /></Svg>(Checkbox)</button>
            <button className="flex h-[21px] w-full items-center gap-[6px] pl-[38px]"><Svg w={16} h={12}><path d="M.5.5h15v11H.5z" fill="#fff" stroke="#555" /></Svg>序号 (Rectangle)</button>
            <button className="flex h-[21px] w-full items-center gap-[6px] pl-[38px]"><span className="w-4 text-center font-['Liberation_Serif',serif] text-[14px] leading-none text-[#555]">A</span>(Paragraph)</button>
          </div>
          <VScroll before="h-[33px]" thumb="h-[7px]" grip={false} />
        </div>
      </section>
    </aside>
  );
}

/* ---------- case editor dialog ---------- */
const tree = [
  [0, "Links", 1], [1, "Open Link", 1], [2, "Current Window"], [2, "New Window/Tab"], [2, "Popup Window"], [2, "Parent Window"],
  [1, "Close Window"], [1, "Open Link in Frame", 2], [1, "Scroll to Widget (Anchor Link)"], [1, "Set Adaptive View"],
  [0, "Widgets", 1], [1, "Show/Hide", 1], [2, "Show"], [2, "Hide"], [2, "Toggle Visibility"], [1, "Set Panel State"],
  [1, "Set Text"], [1, "Set Image"], [1, "Set Selected/Checked", 1], [2, "Selected"],
];
const indent = ["pl-[7px]", "pl-[25px]", "pl-[43px]"];

const plain = ["(Checkbox)", "序号 (Rectangle)", "(Paragraph)", "操作 (Rectangle)"];

function CaseEditor() {
  return (
    <div role="dialog" aria-labelledby="case-title" className="absolute left-[384px] top-[361px] flex w-[885px] flex-col rounded-[7px] border border-[#1f2b36] bg-[linear-gradient(100deg,#d6eafc_0%,#b4d6f7_30%,#a9cef2_60%,#b9dafa_90%)] px-[5px] pb-[5px] shadow-[0_2px_14px_3px_rgba(0,0,0,0.75)]">
      <div className="flex h-[28px] items-start justify-between">
        <div className="flex h-full items-center gap-[5px] pl-px">
          <RPLogo />
          <h2 id="case-title" className="font-['Noto_Sans',sans-serif] text-[12px] text-[#111]">Case Editor (OnItemLoad)</h2>
        </div>
        <button aria-label="Close dialog" className="flex h-[19px] w-[47px] items-center justify-center rounded-b border border-t-0 border-[#5c2626] bg-linear-to-b from-[#e0a79c] via-[#c54a35] to-[#d0705c]">
          <svg width="12" height="11" viewBox="0 0 12 11"><path d="M1 1h3l2 2.500L8 1h3L7.800 5.500 11 10H8L6 7.500 4 10H1l3.200-4.500z" fill="#fff" stroke="#5b3a3a" strokeWidth=".8" /></svg>
        </button>
      </div>
      <div className="flex flex-col border border-[#5c6f82] bg-[#f3f3f3] px-[10px] pb-[6px] pt-[10px]">
        <div className="flex items-center">
          <label htmlFor="case-name" className="w-[73px] text-[12px] text-[#222]">Case Name</label>
          <input id="case-name" defaultValue="Case 1" className="h-[22px] w-[300px] border border-[#b5b5b5] bg-white pl-[2px] text-[11px] text-black" />
          <button className="ml-[15px] h-[22px] w-[102px] border border-[#b5b5b5] text-[11px] text-black">Add Condition</button>
        </div>
        <div className="mt-[12px] grid grid-cols-[220px_271px_339px] gap-x-[10px] text-[12px] leading-[18px] text-[#222]">
          <h3>Click to add actions</h3><h3>Organize actions</h3><h3>Configure actions</h3>
        </div>
        <div className="mt-[6px] grid grid-cols-[220px_271px_339px] gap-x-[10px]">
          <div className="flex h-[438px] flex-col border border-[#b5b5b5] bg-white">
            <div className="flex min-h-0 flex-1">
              <ul className="min-w-0 flex-1 overflow-hidden pr-5">
                {tree.map(([lvl, t, arrow]) => (
                  <li key={t} className={"flex h-[21px] items-center overflow-hidden text-[11px] text-[#222] " + indent[lvl]}>
                    <span className="w-[17px] shrink-0">{arrow && <Expander open={arrow === 1} />}</span>
                    <button className="whitespace-nowrap">{t}</button>
                  </li>
                ))}
              </ul>
              <VScroll thumb="h-[145px]" />
            </div>
            <div className="flex"><HScroll thumb="w-[160px]" /><div className="w-[17px] bg-[#ebebeb]" /></div>
          </div>
          <div className="border border-[#b5b5b5] bg-white">
            <div className="flex h-[21px] items-center pl-[6px] text-[11px] text-black"><Expander /><span className="ml-[6px] flex items-center gap-[9px]"><CaseIcon />Case 1</span></div>
            <div className="flex gap-[7px] bg-[#c9eaf7] pb-[2px] pl-[40px] pt-[3px]"><Bolt /><ActionLines wrapLong /></div>
          </div>
          <div className="flex h-[438px] flex-col border border-[#b5b5b5] bg-white px-1 pt-1 text-[11px] text-[#111]">
            <div className="h-[16px] text-[12px] leading-4 text-[#222]">Select the widgets to set text</div>
            <div className="mt-[4px] flex items-end gap-2">
              <input aria-label="Search widgets" placeholder="Search" className="h-[19px] w-[229px] border border-[#b5b5b5] pl-[3px] placeholder:italic placeholder:text-[#888]" />
              <Check gap="gap-[4px]" className="h-[15px] whitespace-nowrap text-[10px]">Hide Unnamed</Check>
            </div>
            <div className="mt-[5px] flex h-[310px] border border-[#b5b5b5]">
              <div className="min-w-0 flex-1 overflow-hidden">
                <div className="-mt-[16px] pl-[22px]">
                  <Check label="(Checkbox)" className="h-[21px]" />
                  <Check className="h-[21px]">序号 (Rectangle)</Check>
                </div>
                <div className="flex h-[21px] items-center gap-[10px] pl-[7px]"><Expander />(Repeater)</div>
                {plain.map((t) => <Check key={t} className="h-[21px] pl-[40px]">{t}</Check>)}
                {actions.map(([n, f], i) => (
                  <Check key={f} checked className={"h-[21px] pl-[40px] " + (i === 0 ? "bg-[#c9eaf7]" : "")}>
                    <span className="whitespace-pre">
                      {n} (Rectangle) to{" "}
                      {f === "index" ? (
                        <span className="text-[#0a850a]">"[[Item<span className="inline-block h-[14px] w-[31px] rounded-full bg-[#c8ecd3] pl-[3px] align-middle text-[15px] leading-[13px] text-[#3d9a2e]">xh</span>]"</span>
                      ) : <span className="text-[#0a850a]">{`"[[Item.${f}]]"`}</span>}
                    </span>
                  </Check>
                ))}
              </div>
              <VScroll before="h-[193px]" thumb="h-[81px]" />
            </div>
            <label htmlFor="set-kind" className="mt-[6px] h-[16px] text-[12px] leading-4 text-[#222]">Set text to</label>
            <div className="mt-[2px] flex items-center">
              <div className="relative">
                <select id="set-kind" className="h-[22px] w-[150px] appearance-none border border-[#b5b5b5] bg-[#f3f3f3] pl-[7px] text-[12px] text-[#222]"><option>value</option></select>
                <Caret className="absolute right-[3px] top-[10px]" />
              </div>
              <input aria-label="Value" defaultValue="[[Item.tjsj]]" className="ml-[5px] h-[22px] w-[147px] border border-[#b5b5b5] pl-[2px] text-black" />
              <button className="ml-[4px] text-[14px] font-bold text-[#666]">fx</button>
            </div>
          </div>
        </div>
        <div className="mt-[10px] flex justify-end gap-[5px] pr-px font-['Noto_Sans',sans-serif] text-[12px] text-[#222]">
          <button className="h-[23px] w-[75px] rounded-[3px] border-2 border-[#35bdf0] bg-linear-to-b from-[#e9f5fb] to-[#b8dff2]">OK</button>
          <button className="h-[23px] w-[75px] rounded-[3px] border border-[#777] bg-linear-to-b from-[#f3f3f3] to-[#d0d0d0]">Cancel</button>
        </div>
      </div>
    </div>
  );
}

/* ---------- red notes drawn over the window ---------- */
function Notes() {
  const box = "absolute rounded-[2px] border-[#fd2010] ";
  return (
    <div className="pointer-events-none absolute inset-0 overflow-hidden font-['Noto_Sans_CJK_SC',sans-serif] text-[#fd2010]">
      <div className={box + "left-[427px] top-[795px] h-[22px] w-[105px] border-3"} />
      <p className="absolute left-[559px] top-[740px] whitespace-nowrap text-[32px] leading-[41px]">6、设置中继器中的元件<br />展示对应中继器的数据库<br />列的文字</p>
      <div className={box + "left-[974px] top-[634px] h-[174px] w-[57px] border-3"} />
      <div className={box + "left-[1071px] top-[626px] h-[182px] w-[105px] border-3"} />
      <p className="absolute left-[1048px] top-[591px] whitespace-nowrap text-[21px] leading-[30px]">中继器数据库“列”</p>
      <p className="absolute left-[962px] top-[805px] whitespace-nowrap text-[21px] leading-[30px]">元件名称</p>
      <p className="absolute left-[1293px] top-[381px] whitespace-nowrap text-[16px] leading-6">双击进入设置</p>
      <div className={box + "left-[1388px] top-[317px] h-[167px] w-[406px] border-3"} />
      <svg className="absolute left-[1360px] top-[326px]" width="58" height="56" viewBox="0 0 58 56">
        <path d="M1 54 39 12 35 8 56 2 50 25 47 20 2 55z" fill="#fd2010" />
      </svg>
    </div>
  );
}

function InputMethodBar() {
  return (
    <div className="absolute left-[1730px] top-[945px] flex items-center">
      <div className="z-10 flex h-[27px] w-[27px] -rotate-12 items-center justify-center rounded-[3px] bg-[#0b82ea] text-[19px] font-bold leading-none text-white">九</div>
      <div className="-ml-1 flex h-[23px] w-[131px] items-center justify-between bg-white pl-[12px] pr-[8px] text-[16px] font-bold leading-none text-[#0b82ea] shadow-[0_0_2px_#9cc8ee]">
        <button aria-label="Chinese mode">中</button>
        <button aria-label="Half width"><Svg w={14} h={14}><path d="M9 0a7 7 0 1 1-9 9.500A7.500 7.500 0 0 0 9 0z" fill="#0b82ea" /></Svg></button>
        <button aria-label="Punctuation"><Svg w={10} h={14}><circle cx="2.500" cy="2.500" r="1.800" fill="none" stroke="#0b82ea" /><path d="M6 6a2 2 0 1 1 3 2q0 4-3.500 5.500Q7.500 11 7 9A2 2 0 0 1 6 6z" fill="#0b82ea" /></Svg></button>
        <button aria-label="Keyboard"><Svg w={20} h={13}><path d="M0 0h20v13H0z" fill="#0b82ea" /><path d="M2 3.500h16M2 6.500h16M2 10h3M6.500 10h7M15 10h3" stroke="#fff" strokeWidth="1.300" strokeDasharray="2 1" /></Svg></button>
        <button aria-label="Settings"><Svg w={16} h={16}><circle cx="8" cy="8" r="4.500" fill="none" stroke="#0b82ea" strokeWidth="3.600" /><circle cx="8" cy="8" r="6.600" fill="none" stroke="#0b82ea" strokeWidth="2.500" strokeDasharray="3.900 3" /></Svg></button>
      </div>
    </div>
  );
}

const tasks = [
  ["w-[46px]", "bg-[#27527c]"], ["w-[24px]", "bg-[#0f2233]"], ["w-[24px]", "bg-[#b5b04a]"], ["w-[20px]", "bg-[#0f2233]"], ["w-[138px]", "bg-[#e8eef2]"], ["w-[42px]", "bg-[#2d7fc4]"], ["w-[8px]", "bg-[#0c1822]"], ["w-[56px]", "bg-[#7c8c99]"],
  ["w-[19px]", "bg-[#0b141c]"], ["w-[30px]", "bg-[#ffffff]"], ["w-[44px]", "bg-[#0b141c]"], ["w-[16px]", "bg-[#d9ae2f]"], ["w-[33px]", "bg-[#0b141c]"], ["w-[30px]", "bg-[#2f95e6]"], ["w-[48px]", "bg-[#0b141c]"], ["w-[8px]", "bg-[#e6c52e]"], ["w-[36px]", "bg-[#0b141c]"], ["w-[20px]", "bg-[#2b4f94]"], ["w-[30px]", "bg-[#16303f]"],
  ["w-[13px]", "bg-[#e4e9ee]"], ["w-[32px]", "bg-[#9b30c4]"], ["w-[13px]", "bg-[#e4e9ee]"], ["w-[80px]", "bg-[#52708f]"], ["w-[30px]", "bg-[#e01f1f]"], ["w-[18px]", "bg-[#52708f]"],
  ["w-[28px]", "bg-[#d6dde2]"], ["w-[16px]", "bg-[#5cb83a]"], ["w-[16px]", "bg-[#d6dde2]"], ["w-[60px]", "bg-[#9fb0bd]"], ["w-[20px]", "bg-[#6f8ca6]"], ["w-[20px]", "bg-[#e8392d]"], ["w-[20px]", "bg-[#6f8ca6]"], ["w-[66px]", "bg-[#8da3b5]"], ["w-[60px]", "bg-[#a8bccb]"], ["w-[100px]", "bg-[#8fb9d9]"],
];

export default function App() {
  return (
    <div className="relative flex h-screen w-full flex-col overflow-hidden bg-black font-['Liberation_Sans','Noto_Sans_CJK_SC',sans-serif] text-black">
      <div className="flex min-h-0 flex-1">
        <div className="relative flex min-w-0 flex-1 flex-col overflow-hidden">
          <TitleBar />
          <MenuBar />
          <Toolbar />
          <FormatBar />
          <div className="flex min-h-0 flex-1">
            <LeftColumn />
            <Canvas />
            <Inspector />
          </div>
          <div className="absolute right-[-28px] top-[809px] flex h-[48px] w-[48px] items-center rounded-full border-2 border-white bg-[#3fc35c] pl-[4px] text-[12px] font-bold text-white shadow-[0_2px_5px_2px_rgba(0,0,0,0.35)]">71</div>
        </div>
        <div className="flex w-2 shrink-0 flex-col bg-[#f1f1f1]">
          <div className="h-[84px] bg-black" />
          <div className="h-[25px] bg-white" />
          <div className="h-[25px] bg-[#2b579a]" />
          <div className="h-[93px] bg-white" />
          <div className="flex-1" />
          <div className="h-[23px] bg-[#2b579a]" />
          <div className="h-[56px] bg-black" />
        </div>
      </div>
      <div className="flex h-2 shrink-0 overflow-hidden border-t border-[#333] bg-[#05090d]">
        {tasks.map(([w, c], i) => <div key={i} className={"mt-[2px] shrink-0 rounded-t-xs " + w + " " + c} />)}
      </div>
      <CaseEditor />
      <Notes />
      <InputMethodBar />
    </div>
  );
}
